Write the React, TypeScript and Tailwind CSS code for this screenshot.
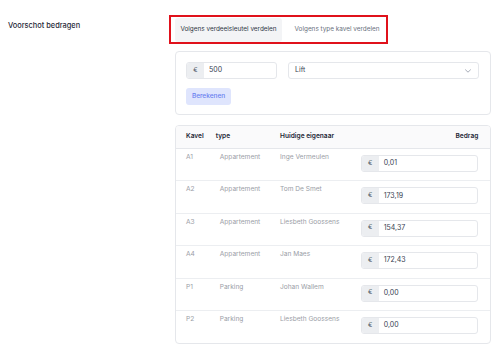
import React from 'react';

type Row = { kavel: string; type: string; owner: string; amount: string };

const rows: Row[] = [
  { kavel: 'A1', type: 'Appartement', owner: 'Inge Vermeulen', amount: '0,01' },
  { kavel: 'A2', type: 'Appartement', owner: 'Tom De Smet', amount: '173,19' },
  { kavel: 'A3', type: 'Appartement', owner: 'Liesbeth Goossens', amount: '154,37' },
  { kavel: 'A4', type: 'Appartement', owner: 'Jan Maes', amount: '172,43' },
  { kavel: 'P1', type: 'Parking', owner: 'Johan Wallem', amount: '0,00' },
  { kavel: 'P2', type: 'Parking', owner: 'Liesbeth Goossens', amount: '0,00' },
];

// € prefix + value, used in both cards
const EuroInput = ({ value, width }: { value: string; width: string }) => (
  <div className={`flex h-[17px] ${width} rounded-[3px] border border-[#e5e7eb] overflow-hidden bg-white`}>
    <div className="flex w-[17px] items-center justify-center bg-[#eceef1] text-[6.5px] text-[#4b5563]">€</div>
    <div className="flex flex-1 items-center pl-[5px] text-[7px] text-[#374151]">{value}</div>
  </div>
);

export default function App() {
  return (
    <div className="flex min-h-[356px] w-[500px] bg-white pl-[8px] pt-[15px] font-['Inter',sans-serif]">
      {/* linker kolom */}
      <div className="w-[161px] shrink-0 pt-[5px] text-[7.4px] font-medium text-[#1f2937]">
        Voorschot bedragen
      </div>

      {/* rechter kolom */}
      <div className="flex flex-col">
        {/* tabs */}
        <div className="flex h-[29px] w-[219px] gap-[7px] border-2 border-[#e0111b] pl-[4px] pt-[1px] whitespace-nowrap">
          <button className="flex h-[24px] w-[107px] shrink-0 items-center justify-center rounded-[3px] bg-[#f3f4f6] text-[6.4px] text-[#2f3744]">
            Volgens verdeelsleutel verdelen
          </button>
          <button className="flex h-[24px] shrink-0 items-center px-[5.5px] text-[6.4px] text-[#6b7280]">
            Volgens type kavel verdelen
          </button>
        </div>

        {/* bereken kaart */}
        <div className="ml-[6px] mt-[7px] w-[316px] rounded-[4px] border border-[#e5e7eb] px-[10px] pb-[9px] pt-[10px]">
          <div className="flex gap-[11px]">
            <EuroInput value="500" width="w-[91px]" />
            <div className="flex h-[17px] w-[191px] items-center justify-between rounded-[3px] border border-[#e5e7eb] pl-[6px] pr-[7px] text-[7px] text-[#374151]">
              <span>Lift</span>
              <svg width="6" height="4" viewBox="0 0 6 4" fill="none" stroke="#9ca3af" strokeWidth="0.9">
                <path d="M0.5 0.8 3 3.2 5.5 0.8" strokeLinecap="round" strokeLinejoin="round" />
              </svg>
            </div>
          </div>
          <button className="mt-[9px] flex h-[17px] w-[45px] items-center justify-center rounded-[3px] bg-[#dfe5fd] text-[6.5px] font-medium text-[#6a80f0]">
            Berekenen
          </button>
        </div>

        {/* tabel */}
        <div className="ml-[6px] mt-[10px] w-[316px] overflow-hidden rounded-[4px] border border-[#e5e7eb]">
          <div className="grid h-[23px] grid-cols-[29.7px_64.3px_80.7px_1fr] items-center border-b border-[#e5e7eb] bg-[#fafafb] pl-[10px] pr-[11.7px] text-[6.6px] font-semibold text-[#1f2937]">
            <span>Kavel</span>
            <span>type</span>
            <span>Huidige eigenaar</span>
            <span className="text-right">Bedrag</span>
          </div>
          {rows.map((r, i) => (
            <div
              key={r.kavel}
              className={`grid h-[32.4px] grid-cols-[29.7px_64.3px_80.7px_1fr] items-start pl-[10px] pr-[11.7px] text-[6.6px] text-[#9a9ea6] ${
                i < rows.length - 1 ? 'border-b border-[#eceef1]' : ''
              }`}
            >
              <span className="pt-[4px]">{r.kavel}</span>
              <span className="pl-[4px] pt-[4px]">{r.type}</span>
              <span className="pt-[4px]">{r.owner}</span>
              <div className="pt-[6px]">
                <EuroInput value={r.amount} width="w-full" />
              </div>
            </div>
          ))}
        </div>
      </div>
    </div>
  );
}
